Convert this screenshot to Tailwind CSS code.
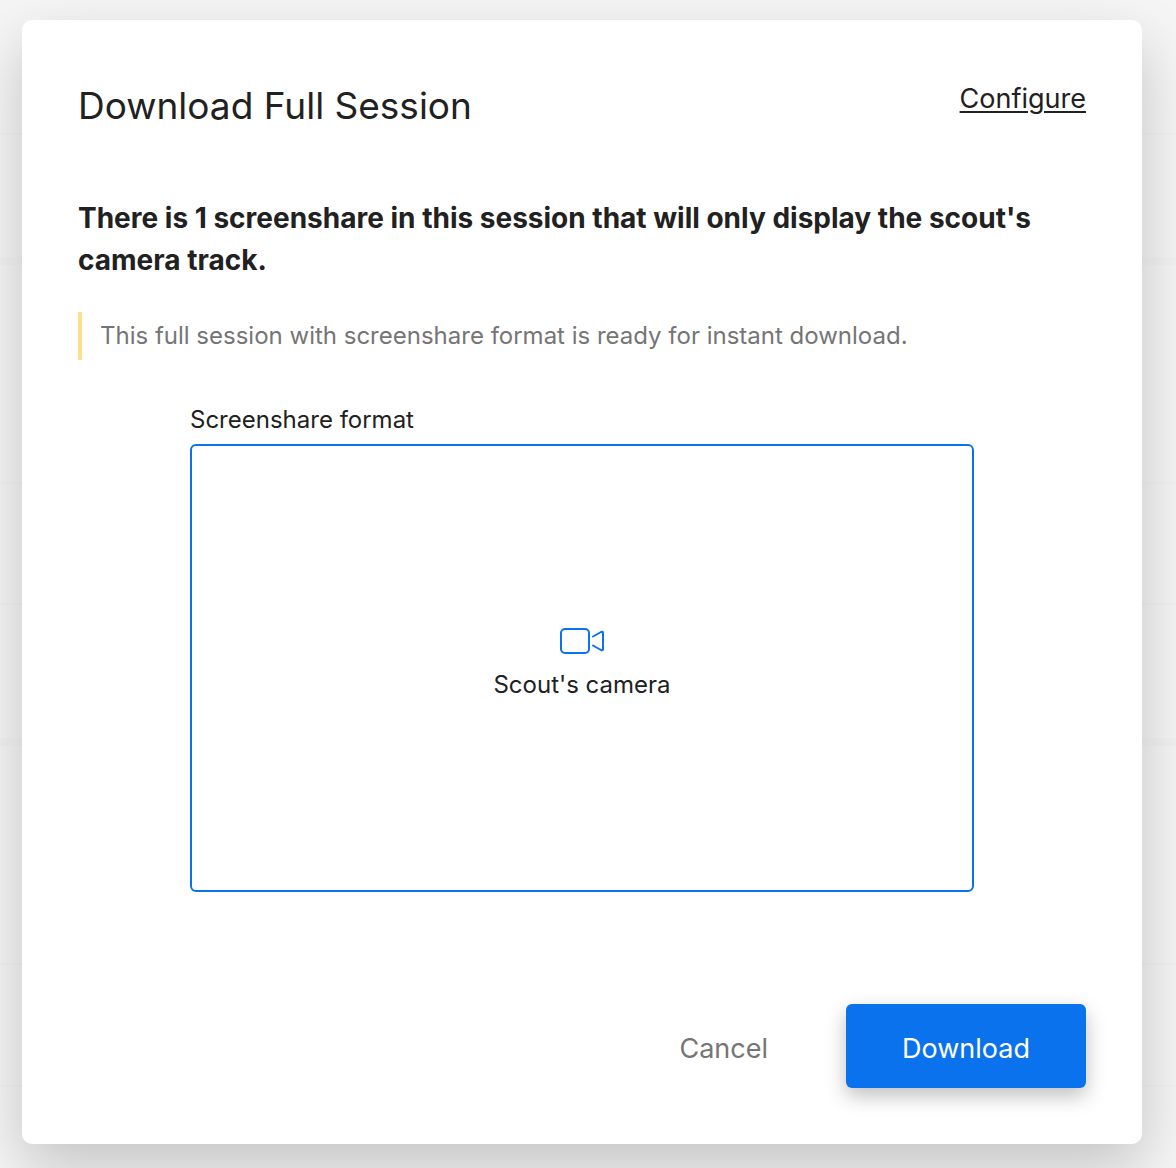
<!DOCTYPE html>
<html lang="en">
<head>
<meta charset="utf-8">
<meta name="viewport" content="width=device-width, initial-scale=1">
<title>Download Full Session</title>
<script src="https://cdn.jsdelivr.net/npm/@tailwindcss/browser@4"></script>
</head>
<body class="relative min-h-screen overflow-x-hidden bg-[#f5f5f5] font-['Inter',sans-serif] text-[#212121]">
<!-- Dimmed list rows behind the dialog -->
<div aria-hidden="true" class="absolute inset-0 flex flex-col overflow-hidden">
  <div class="h-[135px] shrink-0 border-b-2 border-black/1"></div>
  <div class="h-[130px] shrink-0 border-b-8 border-black/1"></div>
  <div class="h-[219px] shrink-0 border-b-2 border-black/1"></div>
  <div class="h-[121px] shrink-0 border-b-2 border-black/1"></div>
  <div class="h-[141px] shrink-0 border-b-8 border-black/1"></div>
  <div class="h-[219px] shrink-0 border-b-2 border-black/1"></div>
  <div class="h-[122px] shrink-0 border-b-2 border-black/1"></div>
</div>
<main class="relative pt-5 pb-6 pl-[22px] pr-[34px]">
  <section role="dialog" aria-labelledby="title" class="rounded-[10px] bg-white p-14 shadow-[0_24px_60px_rgba(0,0,0,0.2)]">
    <header class="flex items-start justify-between">
      <h1 id="title" class="pt-1 text-[37px] leading-[52px]">Download Full Session</h1>
      <a href="#" class="text-[27px] leading-[46px] underline decoration-2 underline-offset-3">Configure</a>
    </header>
    <p class="mt-[65px] text-[28px] leading-[42px] font-bold">There is 1 screenshare in this session that will only display the scout's camera track.</p>
    <p class="mt-[31px] border-l-4 border-[#ffe08a] pl-[18px] text-2xl leading-[48px] text-[#757575]">This full session with screenshare format is ready for instant download.</p>
    <div class="mx-28 mt-10">
      <h2 id="format" class="text-2xl leading-10">Screenshare format</h2>
      <button aria-describedby="format" class="mt-1 flex h-[448px] w-full flex-col items-center justify-center rounded-md border-2 border-[#0b72ed] pb-1.5 text-2xl">
        <svg class="h-7 w-12" viewBox="0 0 48 28" fill="none" stroke="#0b72ed" stroke-width="2" stroke-linecap="round" stroke-linejoin="round" aria-hidden="true"><rect x="3" y="2" width="28" height="24" rx="4"/><path d="M35 9.500L43 5Q45 4 45 6V22Q45 24 43 23L35 18.500"/></svg>
        <span class="mt-3 leading-9">Scout's camera</span>
      </button>
    </div>
    <footer class="mt-28 flex items-center justify-end gap-[78px] text-[27px] leading-10">
      <button class="pt-1.5 text-[#757575]">Cancel</button>
      <button class="h-[84px] w-60 rounded-md bg-[#0b72ed] pt-1.5 text-white shadow-[0_8px_20px_rgba(0,0,0,0.25)]">Download</button>
    </footer>
  </section>
</main>
</body>
</html>
